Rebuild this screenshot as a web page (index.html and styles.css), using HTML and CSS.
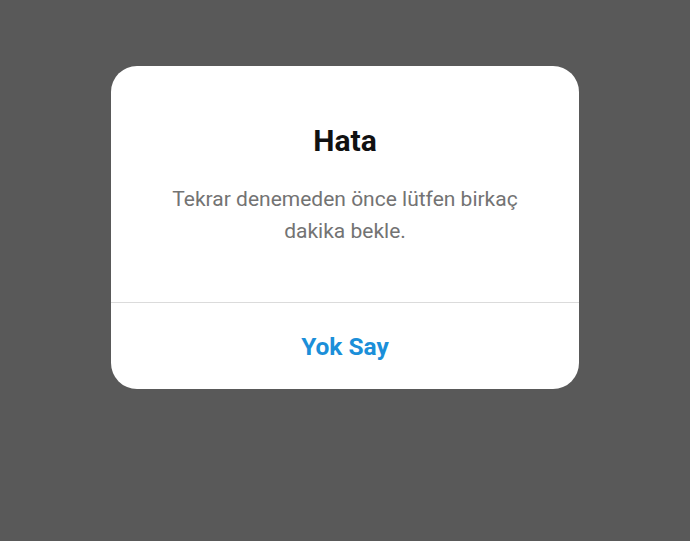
FILE: index.html
```html
<!DOCTYPE html>
<html lang="tr">
<head>
    <meta charset="UTF-8">
    <meta name="viewport" content="width=device-width, initial-scale=1.0">
    <title>Hata</title>
    <link rel="stylesheet" href="styles.css">
</head>
<body>
    <div class="dialog">
        <div class="dialog-body">
            <h2 class="dialog-title">Hata</h2>
            <p class="dialog-message">Tekrar denemeden önce lütfen birkaç dakika bekle.</p>
        </div>
        <button type="button" class="dialog-button">Yok Say</button>
    </div>
</body>
</html>
```

FILE: styles.css
```css
body {
    font-family: Roboto, "Noto Sans", Arial, sans-serif;
    background-color: #595959;
    margin: 0;
    padding-top: 66px;
}
.dialog {
    background-color: #fff;
    width: 468px;
    margin: 0 auto;
    border-radius: 26px;
    overflow: hidden;
}
.dialog-body {
    height: 237px;
    box-sizing: border-box;
    padding: 57px 60px 0;
    text-align: center;
    border-bottom: 1px solid #dbdbdb;
}
.dialog-title {
    margin: 0;
    font-size: 30px;
    font-weight: 700;
    line-height: 36px;
    color: #111;
}
.dialog-message {
    margin: 24px 0 0;
    font-size: 21px;
    line-height: 32px;
    color: #737373;
}
.dialog-button {
    display: block;
    width: 100%;
    height: 86px;
    border: none;
    background: none;
    font-family: inherit;
    font-size: 24.5px;
    font-weight: 700;
    color: #1b8fd9;
    cursor: pointer;
}
```
